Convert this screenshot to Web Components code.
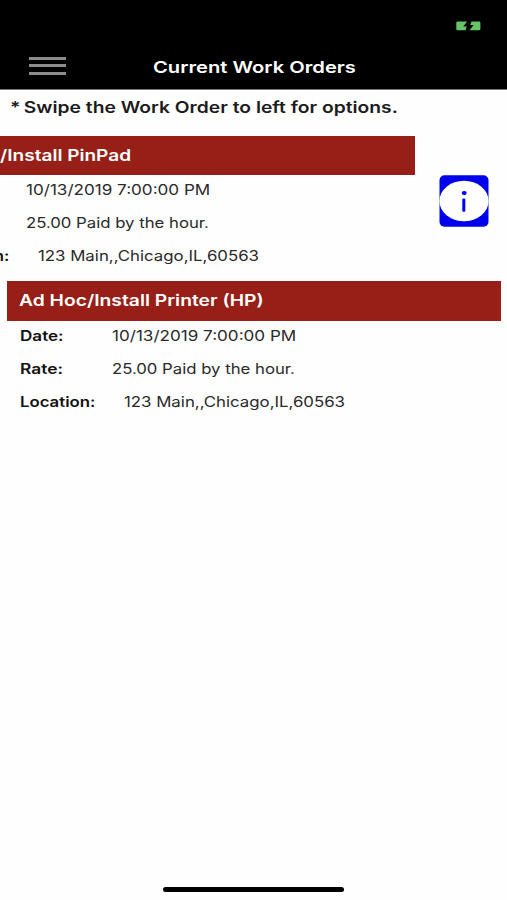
<!DOCTYPE html>
<html lang="en">
<head>
<meta charset="utf-8">
<meta name="viewport" content="width=device-width, initial-scale=1">
<title>Current Work Orders</title>
<style>
    body {
        margin: 0;
        background: #fefefe;
        color: #1c1c1c;
        font-family: Inter, "Liberation Sans", sans-serif;
        overflow: hidden;
    }
</style>
</head>
<body>
<work-orders-app></work-orders-app>

<script>
// single line of text stretched to the given width
customElements.define('wide-text', class extends HTMLElement {
    constructor() {
        super();
        this.attachShadow({ mode: 'open' });
    }

    connectedCallback() {
        const width = Number(this.getAttribute('width'));
        this.shadowRoot.innerHTML = `
        <style>
            :host {
                display: block;
                flex: none;
                width: ${width}px;
                white-space: nowrap;
            }
            span {
                display: inline-block;
                transform-origin: left center;
            }
        </style>
        <span><slot></slot></span>
        `;
        const span = this.shadowRoot.querySelector('span');
        span.style.transform = `scaleX(${width / span.offsetWidth})`;
    }
});

customElements.define('status-bar', class extends HTMLElement {
    constructor() {
        super();
        this.attachShadow({ mode: 'open' });
    }

    connectedCallback() {
        this.shadowRoot.innerHTML = `
        <style>
            :host {
                display: flex;
                justify-content: flex-end;
                box-sizing: border-box;
                height: 46px;
                padding: 21px 26px 0 0;
                background: #000;
            }
            svg {
                display: block;
            }
        </style>
        <svg width="25" height="10" viewBox="0 0 25 10">
            <rect x=".3" y=".4" width="24.1" height="8.9" rx="1.3" fill="#65c466"/>
            <path d="M15.8-.5H11.8L7.3 5.6H10.8L9.3 10H13L17.7 4H14.2z" fill="#000"/>
        </svg>
        `;
    }
});

customElements.define('nav-bar', class extends HTMLElement {
    constructor() {
        super();
        this.attachShadow({ mode: 'open' });
    }

    connectedCallback() {
        this.shadowRoot.innerHTML = `
        <style>
            :host {
                display: flex;
                align-items: flex-start;
                box-sizing: border-box;
                height: 44px;
                padding-left: 29px;
                background: #000;
                border-bottom: 1px solid #777;
                color: #fff;
                font-size: 16.5px;
                font-weight: 600;
                line-height: 20px;
            }
            .menu {
                display: flex;
                flex-direction: column;
                gap: 4.5px;
                width: 37px;
                margin: 10.6px 87px 0 0;
            }
            .menu i {
                height: 3px;
                background: #8c8c8c;
            }
            .title {
                margin-top: 11px;
            }
        </style>
        <div class="menu"><i></i><i></i><i></i></div>
        <div class="title"><slot></slot></div>
        `;
    }
});

customElements.define('info-button', class extends HTMLElement {
    constructor() {
        super();
        this.attachShadow({ mode: 'open' });
    }

    connectedCallback() {
        this.shadowRoot.innerHTML = `
        <style>
            :host {
                display: block;
                width: 50px;
                height: 52px;
            }
            svg {
                display: block;
            }
        </style>
        <svg width="50" height="52" viewBox="0 0 50 52">
            <rect x=".5" y=".2" width="49" height="51.6" rx="5" fill="#0000ee"/>
            <ellipse cx="25" cy="26" rx="24.6" ry="20.3" fill="#fefefe"/>
            <ellipse cx="25.2" cy="18.1" rx="2.5" ry="2.1" fill="#0000ee"/>
            <rect x="23.3" y="23.4" width="3" height="13.4" rx="1.2" fill="#0000ee"/>
        </svg>
        `;
    }
});

customElements.define('order-row', class extends HTMLElement {
    constructor() {
        super();
        this.attachShadow({ mode: 'open' });
    }

    connectedCallback() {
        this.shadowRoot.innerHTML = `
        <style>
            :host {
                display: flex;
                height: 33px;
                padding-left: 12.5px;
                font-size: 14.3px;
                line-height: 30px;
            }
            .label {
                flex: none;
                min-width: 92px;
                font-weight: 600;
                color: #111;
            }
            .value {
                margin-left: ${this.getAttribute('gap') || 0}px;
                color: #2a2a2a;
            }
        </style>
        <div class="label"><slot name="label"></slot></div>
        <div class="value"><slot></slot></div>
        `;
    }
});

customElements.define('work-order', class extends HTMLElement {
    constructor() {
        super();
        this.attachShadow({ mode: 'open' });
    }

    connectedCallback() {
        const swipe = this.getAttribute('swipe') || 0;
        this.shadowRoot.innerHTML = `
        <style>
            :host {
                display: flex;
                height: 145.5px;
            }
            .card {
                flex: none;
                width: 494px;
                margin-left: ${7 - swipe}px;
            }
            .heading {
                box-sizing: border-box;
                height: 39.5px;
                padding-left: 12px;
                background: #971f17;
                color: #fff;
                font-size: 16px;
                font-weight: 600;
                line-height: 39px;
            }
            .actions {
                padding: 39px 0 0 24px;
            }
        </style>
        <div class="card">
            <div class="heading"><slot name="title"></slot></div>
            <slot></slot>
        </div>
        <div class="actions"><slot name="actions"></slot></div>
        `;
    }
});

customElements.define('home-indicator', class extends HTMLElement {
    constructor() {
        super();
        this.attachShadow({ mode: 'open' });
    }

    connectedCallback() {
        this.shadowRoot.innerHTML = `
        <style>
            :host {
                display: block;
                width: 181px;
                height: 5px;
                margin: auto auto 8px;
                border-radius: 3px;
                background: #000;
            }
        </style>
        `;
    }
});

customElements.define('work-orders-app', class extends HTMLElement {
    constructor() {
        super();
        this.attachShadow({ mode: 'open' });
    }

    connectedCallback() {
        const orders = [
            { title: 'Ad Hoc/Install PinPad', titleWidth: 197.5, swipe: 86 },
            { title: 'Ad Hoc/Install Printer (HP)', titleWidth: 244.5, swipe: 0 },
        ];
        const list = orders.map((order) => `
            <work-order swipe="${order.swipe}">
                <wide-text slot="title" width="${order.titleWidth}">${order.title}</wide-text>
                <order-row>
                    <wide-text slot="label" width="43">Date:</wide-text>
                    <wide-text width="184">10/13/2019 7:00:00 PM</wide-text>
                </order-row>
                <order-row gap=".7">
                    <wide-text slot="label" width="42.5">Rate:</wide-text>
                    <wide-text width="182.5">25.00 Paid by the hour.</wide-text>
                </order-row>
                <order-row gap="12.7">
                    <wide-text slot="label" width="75">Location:</wide-text>
                    <wide-text width="221">123 Main,,Chicago,IL,60563</wide-text>
                </order-row>
                ${order.swipe ? '<info-button slot="actions"></info-button>' : ''}
            </work-order>
        `).join('');
        this.shadowRoot.innerHTML = `
        <style>
            :host {
                display: flex;
                flex-direction: column;
                height: 900px;
                overflow: hidden;
            }
            .hint {
                height: 45.5px;
                padding-left: 10px;
                font-size: 16px;
                font-weight: 600;
                line-height: 34px;
            }
            .star {
                margin-right: -1.2px;
            }
        </style>
        <status-bar></status-bar>
        <nav-bar><wide-text width="203">Current Work Orders</wide-text></nav-bar>
        <div class="hint"><wide-text width="387.5"><span class="star">*</span> Swipe the Work Order to left for options.</wide-text></div>
        ${list}
        <home-indicator></home-indicator>
        `;
    }
});
</script>
</body>
</html>
